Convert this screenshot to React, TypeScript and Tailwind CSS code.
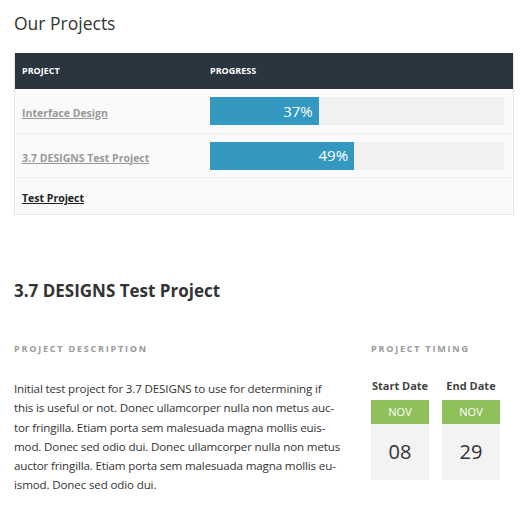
import React from 'react'

const projects = [
  { name: 'Interface Design', progress: 37, muted: true },
  { name: '3.7 DESIGNS Test Project', progress: 49, muted: true },
  { name: 'Test Project', progress: null, muted: false },
]

const description = [
  'Initial test project for 3.7 DESIGNS to use for determining if',
  'this is useful or not. Donec ullamcorper nulla non metus auc-',
  'tor fringilla. Etiam porta sem malesuada magna mollis euis-',
  'mod. Donec sed odio dui. Donec ullamcorper nulla non metus',
  'auctor fringilla. Etiam porta sem malesuada magna mollis eu-',
  'ismod. Donec sed odio dui.',
]

function DateCard({ label, month, day }: { label: string; month: string; day: string }) {
  return (
    <div className="w-[58px] flex flex-col items-center">
      <div className="text-[11px] font-bold text-[#444] leading-[14px] whitespace-nowrap">{label}</div>
      <div className="mt-[7px] w-full h-[24px] bg-[#8fc05a] text-white text-[11px] flex items-center justify-center">
        {month}
      </div>
      <div className="w-full h-[56px] bg-[#f3f3f3] text-[20px] text-[#333] flex items-center justify-center">
        {day}
      </div>
    </div>
  )
}

export default function App() {
  return (
    <div className="w-[530px] h-[522px] bg-white font-['Open_Sans',sans-serif] text-[#333] overflow-hidden">
      <div className="pl-[14px] pr-[16px] pt-[10px]">
        {/* Projects table */}
        <h2 className="text-[17.5px] leading-[26px] text-[#333]">Our Projects</h2>

        <div className="mt-[17px] border-x border-b border-[#e6e6e6]">
          <div className="h-[36px] bg-[#2b3540] flex items-center text-white text-[9px] font-bold uppercase">
            <div className="w-[195px] pl-[7px]">Project</div>
            <div>Progress</div>
          </div>

          {projects.map((p, i) => (
            <div
              key={p.name}
              className={`flex items-center bg-[#fafafa] ${i > 0 ? 'border-t border-[#f0f0f0]' : ''} ${p.progress === null ? 'h-[37px]' : 'h-[44px]'}`}
            >
              <div className="w-[195px] pl-[7px]">
                <span className={`text-[10.5px] font-bold underline ${p.muted ? 'text-[#999]' : 'text-[#222]'}`}>
                  {p.name}
                </span>
              </div>
              {p.progress !== null && (
                <div className="flex-1 mr-[9px] h-[28px] bg-[#f1f1f1]">
                  <div
                    className="h-full bg-[#3399c0] text-white text-[15px] flex items-center justify-end pr-[6px]"
                    style={{ width: `${p.progress}%` }}
                  >
                    {p.progress}%
                  </div>
                </div>
              )}
            </div>
          ))}
        </div>

        {/* Project detail */}
        <h3 className="mt-[64px] text-[17px] leading-[24px] font-bold text-[#333]">3.7 DESIGNS Test Project</h3>

        <div className="mt-[40px] flex">
          <div className="w-[337px]">
            <div className="text-[9px] font-bold tracking-[1.8px] text-[#999] uppercase leading-[12px]">
              Project Description
            </div>
            <p className="mt-[24px] text-[11.6px] tracking-[-0.15px] leading-[19.3px] text-[#333] whitespace-nowrap">
              {description.map((line, i) => (
                <React.Fragment key={i}>
                  {line}
                  {i < description.length - 1 && <br />}
                </React.Fragment>
              ))}
            </p>
          </div>
          <div className="ml-[20px]">
            <div className="text-[9px] font-bold tracking-[1.8px] text-[#999] uppercase leading-[12px]">
              Project Timing
            </div>
            <div className="mt-[24px] flex gap-[13px]">
              <DateCard label="Start Date" month="NOV" day="08" />
              <DateCard label="End Date" month="NOV" day="29" />
            </div>
          </div>
        </div>
      </div>
    </div>
  )
}
